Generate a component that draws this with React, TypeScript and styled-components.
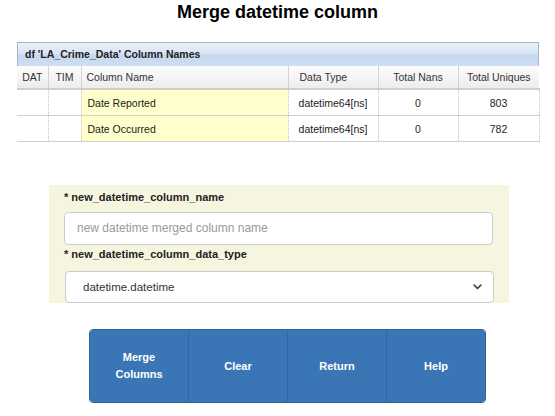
import React from "react";
import styled, { createGlobalStyle } from "styled-components";

const GlobalStyle = createGlobalStyle`
  html, body {
    margin: 0;
    padding: 0;
    background: #ffffff;
    font-family: "Liberation Sans", Arial, sans-serif;
    color: #222;
  }
`;

const StyledPage = styled.div`
  width: 555px;
  height: 416px;
  overflow: hidden;
  display: flex;
  flex-direction: column;
`;

const StyledTitle = styled.h1`
  margin: 0;
  padding-top: 1px;
  height: 41px;
  font-size: 18px;
  line-height: 22px;
  font-weight: bold;
  text-align: center;
  color: #000;
`;

const StyledTableWrap = styled.div`
  margin-left: 17px;
  width: 522px;
`;

const StyledCaption = styled.div`
  height: 23px;
  line-height: 23px;
  border: 1px solid #a9b4c2;
  border-bottom: none;
  padding-left: 7px;
  font-size: 10.5px;
  font-weight: bold;
  color: #222;
  background: linear-gradient(#e9f0f9 0%, #d9e5f5 45%, #c5d7ef 55%, #cfdef2 100%);
`;

const StyledTable = styled.table`
  width: 100%;
  border-collapse: collapse;
  table-layout: fixed;
  font-size: 10.5px;
`;

const StyledTh = styled.th<{ align?: string; padLeft?: number }>`
  height: 22px;
  padding: 0 0 0 ${({ padLeft }) => padLeft ?? 0}px;
  font-weight: normal;
  color: #333;
  text-align: ${({ align }) => align || "center"};
  background: linear-gradient(#fdfdfd, #ececec);
  border-left: 1px solid #d3d3d3;
  border-bottom: 2px solid #cfcfcf;
  &:first-child {
    border-left: none;
  }
`;

const StyledTd = styled.td<{ highlight?: boolean; align?: string }>`
  height: 25px;
  padding: 0 0 0 ${({ align }) => (align === "left" ? "6px" : "0")};
  text-align: ${({ align }) => align || "center"};
  color: #222;
  background: ${({ highlight }) => (highlight ? "#ffffcc" : "#ffffff")};
  border-left: 1px dotted #c4c4c4;
  border-bottom: 1px solid #cfcfcf;
  &:first-child {
    border-left: none;
  }
  &:last-child {
    border-right: 1px dotted #c4c4c4;
  }
`;

const StyledForm = styled.div`
  margin: 43px 0 0 49px;
  width: 460px;
  height: 118px;
  padding: 4px 16px 0 15px;
  box-sizing: border-box;
  background: #f6f5e0;
  display: flex;
  flex-direction: column;
`;

const StyledLabel = styled.label<{ gapBelow: number }>`
  display: block;
  height: 16px;
  line-height: 16px;
  font-size: 11px;
  font-weight: bold;
  color: #222;
  margin-bottom: ${({ gapBelow }) => gapBelow}px;
`;

const StyledInput = styled.input`
  box-sizing: border-box;
  width: 429px;
  height: 33px;
  padding: 0 12px;
  border: 1px solid #cccccc;
  border-radius: 4px;
  background: #fff;
  font-family: "Liberation Sans", Arial, sans-serif;
  font-size: 12px;
  color: #555;
  margin-bottom: 1px;
  outline: none;
  &::placeholder {
    color: #999;
  }
`;

const StyledSelectBox = styled.div`
  box-sizing: border-box;
  width: 429px;
  height: 33px;
  margin-left: 1px;
  padding: 0 11px 0 17px;
  border: 1px solid #cccccc;
  border-radius: 4px;
  background: #fff;
  display: flex;
  align-items: center;
  justify-content: space-between;
  font-size: 11.5px;
  color: #333;
`;

const StyledButtonBar = styled.div`
  margin: 26px 0 0 89px;
  width: 397px;
  height: 74px;
  display: flex;
  border: 1px solid #2e6599;
  border-radius: 4px;
  overflow: hidden;
  box-sizing: border-box;
`;

const StyledButton = styled.button`
  flex: 1;
  border: none;
  border-left: 1px solid #2f68a0;
  background: #3a76b5;
  color: #fff;
  font-family: "Liberation Sans", Arial, sans-serif;
  font-size: 11px;
  font-weight: bold;
  line-height: 17px;
  padding: 0 18px;
  cursor: pointer;
  &:first-child {
    border-left: none;
  }
`;

const columns = [
  { title: "DAT", width: 31 },
  { title: "TIM", width: 33 },
  { title: "Column Name", width: 207, align: "left", padLeft: 5 },
  { title: "Data Type", width: 90, align: "left", padLeft: 11 },
  { title: "Total Nans", width: 80 },
  { title: "Total Uniques", width: 81 },
];

const rows = [
  { name: "Date Reported", type: "datetime64[ns]", nans: 0, uniques: 803 },
  { name: "Date Occurred", type: "datetime64[ns]", nans: 0, uniques: 782 },
];

const Chevron = () => (
  <svg width="9" height="6" viewBox="0 0 9 6">
    <path
      d="M1.2 1.2 L4.5 4.5 L7.8 1.2"
      fill="none"
      stroke="#444"
      strokeWidth="1.7"
      strokeLinecap="round"
      strokeLinejoin="round"
    />
  </svg>
);

export default function App() {
  return (
    <>
      <GlobalStyle />
      <StyledPage>
        <StyledTitle>Merge datetime column</StyledTitle>
        <StyledTableWrap>
          <StyledCaption>df 'LA_Crime_Data' Column Names</StyledCaption>
          <StyledTable>
            <colgroup>
              {columns.map((c) => (
                <col key={c.title} style={{ width: c.width }} />
              ))}
            </colgroup>
            <thead>
              <tr>
                {columns.map((c) => (
                  <StyledTh key={c.title} align={c.align} padLeft={c.padLeft}>
                    {c.title}
                  </StyledTh>
                ))}
              </tr>
            </thead>
            <tbody>
              {rows.map((r) => (
                <tr key={r.name}>
                  <StyledTd />
                  <StyledTd />
                  <StyledTd highlight align="left">
                    {r.name}
                  </StyledTd>
                  <StyledTd>{r.type}</StyledTd>
                  <StyledTd>{r.nans}</StyledTd>
                  <StyledTd>{r.uniques}</StyledTd>
                </tr>
              ))}
            </tbody>
          </StyledTable>
        </StyledTableWrap>

        <StyledForm>
          <StyledLabel gapBelow={7}>* new_datetime_column_name</StyledLabel>
          <StyledInput placeholder="new datetime merged column name" />
          <StyledLabel gapBelow={9}>* new_datetime_column_data_type</StyledLabel>
          <StyledSelectBox>
            <span>datetime.datetime</span>
            <Chevron />
          </StyledSelectBox>
        </StyledForm>

        <StyledButtonBar>
          <StyledButton>Merge Columns</StyledButton>
          <StyledButton>Clear</StyledButton>
          <StyledButton>Return</StyledButton>
          <StyledButton>Help</StyledButton>
        </StyledButtonBar>
      </StyledPage>
    </>
  );
}
